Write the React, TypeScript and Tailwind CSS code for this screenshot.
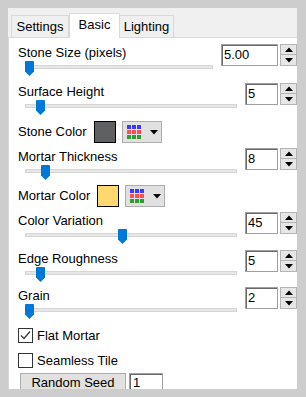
import React from "react";

const Thumb = () => (
  <svg width="9" height="15" viewBox="0 0 9 15" className="block">
    <path d="M0 1 Q0 0 1 0 L8 0 Q9 0 9 1 L9 10.5 L4.5 15 L0 10.5 Z" fill="#0078d7" />
  </svg>
);

const Tri = ({ up }: { up: boolean }) => (
  <svg width="8" height="5" viewBox="0 0 8 5" className="block">
    {up ? <path d="M0 5 L4 0.5 L8 5 Z" fill="#000" /> : <path d="M0 0 L8 0 L4 4.5 Z" fill="#000" />}
  </svg>
);

const Spin = ({ value, boxClass }: { value: string; boxClass: string }) => (
  <div className="flex shrink-0">
    <div
      className={`${boxClass} h-[22px] border border-[#a0a0a0] shadow-[inset_1px_1px_0_#696969] bg-white pl-[2px] leading-[20px]`}
    >
      {value}
    </div>
    <div className="ml-[2px] w-[17px] h-[22px] flex flex-col">
      <div className="h-[11px] bg-[#e6e6e6] border border-[#b4b4b4] flex items-center justify-center">
        <Tri up={true} />
      </div>
      <div className="h-[11px] bg-[#e6e6e6] border border-t-0 border-[#b4b4b4] flex items-center justify-center">
        <Tri up={false} />
      </div>
    </div>
  </div>
);

const SliderBlock = ({
  label,
  value,
  thumb,
  mt,
  boxClass,
}: {
  label: string;
  value: string;
  thumb: number;
  mt: string;
  boxClass: string;
}) => (
  <div className={`flex ${mt}`}>
    <div className="flex-1 flex flex-col">
      <div className="h-[16px] leading-[16px] pt-[1px] whitespace-nowrap">{label}</div>
      <div className="h-[16px] relative ml-[7px] mr-[8px]">
        <div className="absolute left-0 right-0 top-[5px] h-[4px] bg-[#e7e7e7] border border-[#d6d6d6]" />
        <div className="absolute top-[1px]" style={{ left: thumb }}>
          <Thumb />
        </div>
      </div>
    </div>
    <Spin value={value} boxClass={boxClass} />
  </div>
);

const PaletteIcon = () => (
  <svg width="14" height="14" viewBox="0 0 14 14" className="block">
    {[0, 1, 2].map((r) =>
      [0, 1, 2].map((c) => (
        <rect
          key={`${r}-${c}`}
          x={c * 5}
          y={r * 5}
          width="4"
          height="4"
          fill={r === 0 ? "#3b3bff" : r === 1 ? "#ff4f4f" : "#2f9e2f"}
        />
      ))
    )}
  </svg>
);

const ColorRow = ({ label, color, mt }: { label: string; color: string; mt: string }) => (
  <div className={`flex items-center h-[22px] ${mt}`}>
    <span className="whitespace-nowrap">{label}</span>
    <div className="ml-[7px] w-[22px] h-[22px] border border-black" style={{ background: color }} />
    <div className="ml-[6px] w-[40px] h-[22px] bg-[#e1e1e1] border border-[#adadad] flex items-center pl-[4px]">
      <PaletteIcon />
      <div className="ml-[9px]">
        <Tri up={false} />
      </div>
    </div>
  </div>
);

const Check = ({ label, checked, mt }: { label: string; checked: boolean; mt: string }) => (
  <div className={`flex items-center h-[15px] ${mt}`}>
    <div className="w-[15px] h-[15px] border border-[#333] bg-white flex items-center justify-center">
      {checked && (
        <svg width="13" height="13" viewBox="0 0 13 13" className="block">
          <path d="M2 6.5 L5 9.5 L11 2.5" fill="none" stroke="#333" strokeWidth="1.2" />
        </svg>
      )}
    </div>
    <span className="ml-[4px] whitespace-nowrap">{label}</span>
  </div>
);

export default function App() {
  return (
    <div className="w-[306px] h-[397px] bg-[#cdcdcd] pt-[8px] pl-[8px] pr-[9px] pb-[8px] overflow-hidden font-['Liberation_Sans',Arial,sans-serif] text-[13px] text-black">
      <div className="h-full flex flex-col bg-[#f0f0f0]">
        <div className="h-[29px] flex items-end pl-[3px] shrink-0 relative z-10">
          <div className="w-[58px] h-[22px] border border-b-0 border-[#d9d9d9] bg-[#f0f0f0] flex items-center justify-center">
            Settings
          </div>
          <div className="w-[51px] h-[25px] -mb-[1px] border border-b-0 border-[#d9d9d9] bg-white flex items-center justify-center pb-[2px]">
            Basic
          </div>
          <div className="w-[54px] h-[22px] border border-b-0 border-l-0 border-[#d9d9d9] bg-[#f0f0f0] flex items-center justify-center">
            Lighting
          </div>
        </div>
        <div className="flex-1 bg-white border-l border-t border-[#d9d9d9] overflow-hidden pl-[9px] pt-[6px]">
          <SliderBlock label="Stone Size (pixels)" value="5.00" thumb={0} mt="mt-0" boxClass="w-[57px]" />
          <SliderBlock label="Surface Height" value="5" thumb={11} mt="mt-[7px]" boxClass="w-[33px]" />
          <ColorRow label="Stone Color" color="#5e6062" mt="mt-[6px]" />
          <SliderBlock label="Mortar Thickness" value="8" thumb={16} mt="mt-[5px]" boxClass="w-[33px]" />
          <ColorRow label="Mortar Color" color="#ffd870" mt="mt-[5px]" />
          <SliderBlock label="Color Variation" value="45" thumb={93} mt="mt-[5px]" boxClass="w-[33px]" />
          <SliderBlock label="Edge Roughness" value="5" thumb={11} mt="mt-[6px]" boxClass="w-[33px]" />
          <SliderBlock label="Grain" value="2" thumb={0} mt="mt-[5px]" boxClass="w-[33px]" />
          <Check label="Flat Mortar" checked={true} mt="mt-[9px]" />
          <Check label="Seamless Tile" checked={false} mt="mt-[10px]" />
          <div className="flex mt-[5px] ml-[2px]">
            <div className="w-[106px] h-[22px] bg-[#e1e1e1] border border-[#adadad] flex justify-center pt-[2px] leading-[13px]">
              Random Seed
            </div>
            <div className="ml-[3px] w-[34px] h-[22px] border border-[#a0a0a0] shadow-[inset_1px_1px_0_#696969] bg-white pl-[3px] pt-[2px] leading-[13px]">
              1
            </div>
          </div>
        </div>
      </div>
    </div>
  );
}
